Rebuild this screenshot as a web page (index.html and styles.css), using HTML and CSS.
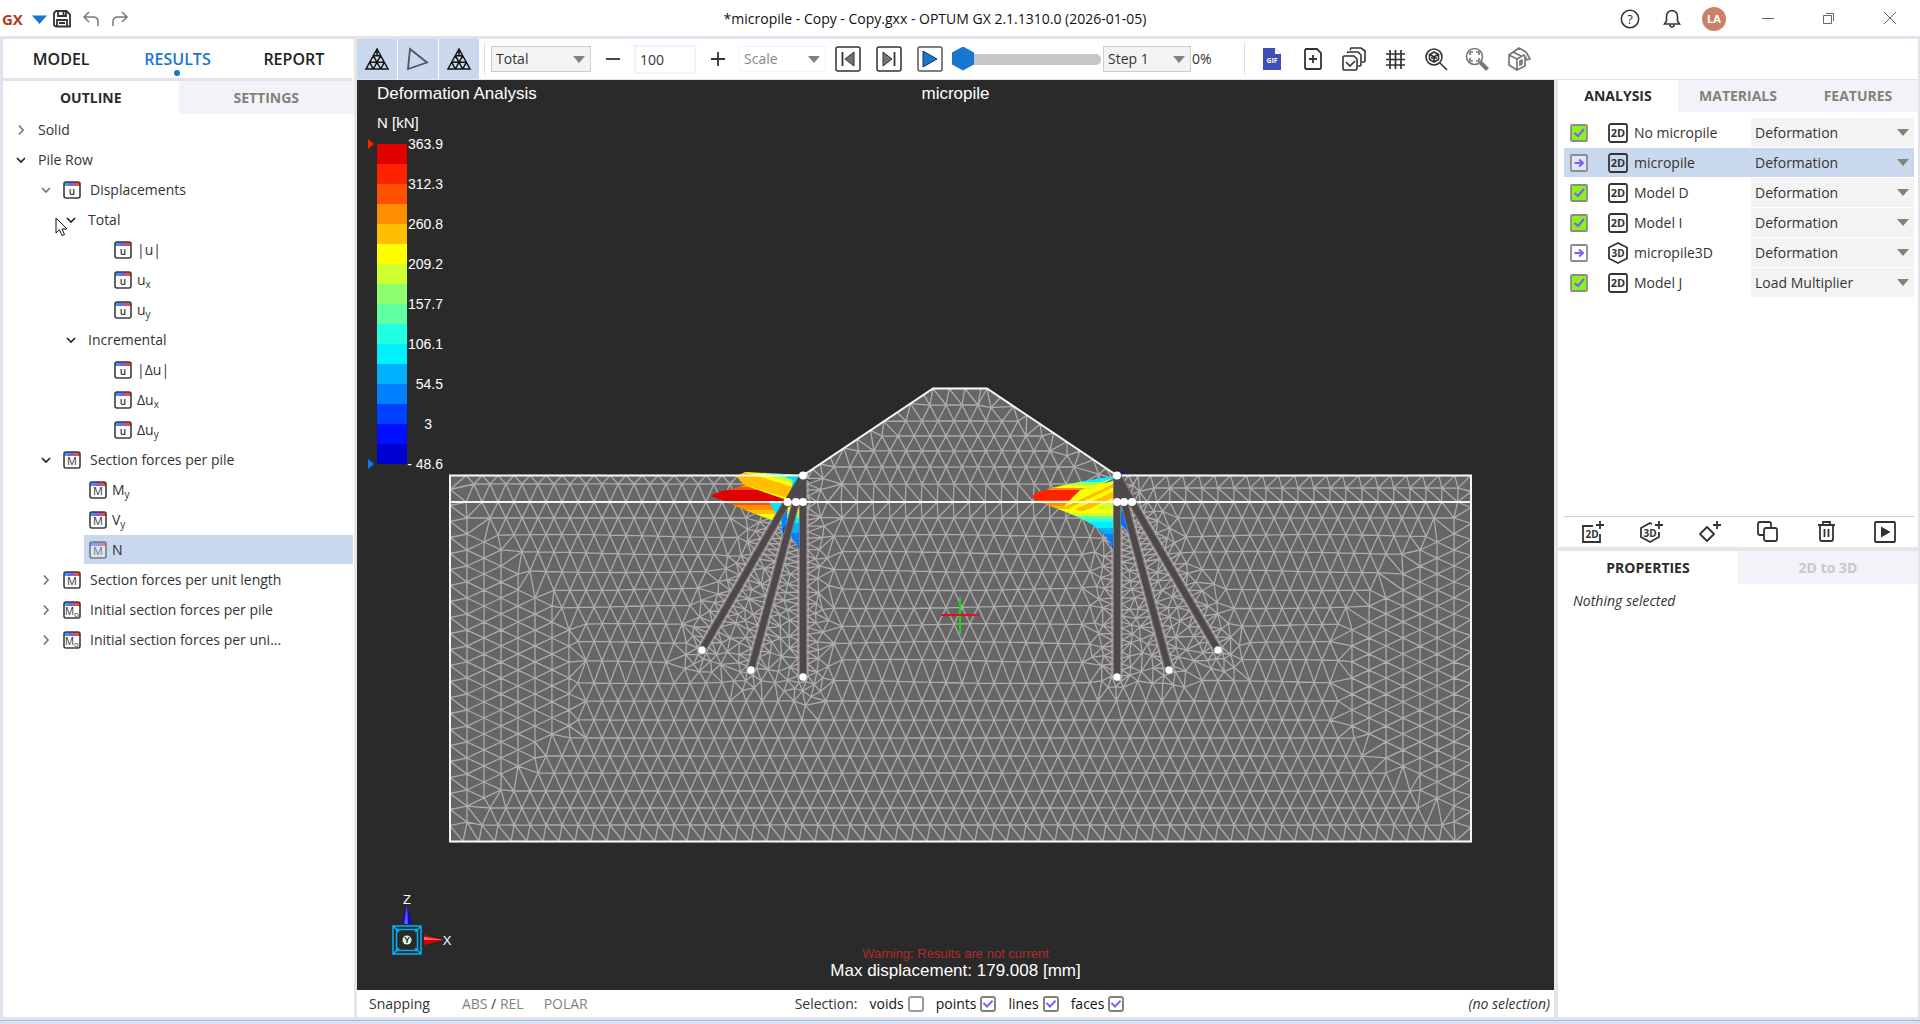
FILE: index.html
```html
<!DOCTYPE html>
<html lang="en">
<head>
<meta charset="utf-8">
<title>*micropile - Copy - Copy.gxx - OPTUM GX 2.1.1310.0 (2026-01-05)</title>
<link rel="stylesheet" href="styles.css">
</head>
<body>
<svg class="defs" aria-hidden="true">
  <defs>
    <linearGradient id="spectrum"><stop offset="0" stop-color="#1fb4ff"/><stop offset=".45" stop-color="#7a5cff"/><stop offset=".8" stop-color="#f0503c"/><stop offset="1" stop-color="#e8402a"/></linearGradient>
    <symbol id="frame" viewBox="0 0 18 18"><rect x="1" y="1" width="16" height="16" rx="2" fill="#fff" fill-opacity=".6"/><rect x="1" y="1" width="16" height="4" fill="url(#spectrum)"/><rect x="1" y="1" width="16" height="16" rx="2" fill="none" stroke="#3c3c3c" stroke-width="1.6"/></symbol>
    <symbol id="res-u" viewBox="0 0 18 18"><use href="#frame"/><text class="glyph" x="9" y="14" text-anchor="middle" font-size="10" font-weight="600">u</text></symbol>
    <symbol id="res-m" viewBox="0 0 18 18"><use href="#frame"/><text class="glyph" x="9" y="14" text-anchor="middle" font-size="11">M</text></symbol>
    <symbol id="res-m0" viewBox="0 0 18 18"><use href="#frame"/><text class="glyph" x="2" y="14" font-size="10">M</text><text class="glyph" x="11" y="16" font-size="8">o</text></symbol>
    <symbol id="open" viewBox="0 0 16 16"><path d="M4 6l4 4 4-4" fill="none" stroke="currentColor" stroke-width="1.7"/></symbol>
    <symbol id="closed" viewBox="0 0 16 16"><path d="M6 3.500l4 4.500-4 4.500" fill="none" stroke="currentColor" stroke-width="1.7"/></symbol>
    <symbol id="mesh-icon" viewBox="0 0 26 24"><path d="M13 2L24 22H2zM9.300 8.700h7.400M5.700 15.300h14.600M9.300 8.700L16.700 22M16.700 8.700L9.300 22M5.700 15.300L9.300 22M20.300 15.300L16.700 22M13 2v6.700" fill="none" stroke="#111" stroke-width="1.5"/></symbol>
    <symbol id="dim2" viewBox="0 0 20 20"><rect x="1" y="1" width="18" height="18" rx="2" fill="none" stroke="#333" stroke-width="1.8"/><text class="glyph" x="10" y="14" text-anchor="middle" font-size="11" font-weight="700">2D</text></symbol>
    <symbol id="dim3" viewBox="0 0 20 22"><path d="M10 1l9 4.500v11L10 21l-9-4.500v-11z" fill="none" stroke="#333" stroke-width="1.8" stroke-linejoin="round"/><text class="glyph" x="10" y="15" text-anchor="middle" font-size="10" font-weight="700">3D</text></symbol>
    <symbol id="done" viewBox="0 0 18 18"><rect x="1" y="1" width="16" height="16" rx="1" fill="#8cf01e" stroke="#8c8c8c" stroke-width="1.8"/><path d="M4.500 9l3.500 3 6-7" fill="none" stroke="#7b5cff" stroke-width="2"/></symbol>
    <symbol id="queued" viewBox="0 0 18 18"><rect x="1" y="1" width="16" height="16" rx="1" fill="#fff" fill-opacity=".4" stroke="#8c8c8c" stroke-width="1.8"/><path d="M4.500 9h8M9 5.500L13 9l-4 3.500" fill="none" stroke="#7b5cff" stroke-width="2"/></symbol>
  </defs>
</svg>

<header class="titlebar">
  <div class="quick">
    <b class="logo">GX</b>
    <button aria-label="File menu"><svg width="16" height="16"><path d="M1 4.500h15L8.500 13z" fill="#1776d0"/></svg></button>
    <button aria-label="Save"><svg width="18" height="18" fill="none" stroke="#333" stroke-width="1.8"><path d="M3 1h10.500L17 4.500V16.500H3L1 15V3zM5 1v5h8V1M4 17v-7h10v7M6 13h6"/><path d="M10.500 2v3"/></svg></button>
    <button aria-label="Undo"><svg width="18" height="18" fill="none" stroke="#777" stroke-width="1.5"><path d="M7 2L2 7l5 5M2 7h9q5 0 5 5v4"/></svg></button>
    <button aria-label="Redo"><svg width="18" height="18" fill="none" stroke="#777" stroke-width="1.5"><path d="M11 2l5 5-5 5M16 7H7q-5 0-5 5v4"/></svg></button>
  </div>
  <h1>*micropile - Copy - Copy.gxx - OPTUM GX 2.1.1310.0 (2026-01-05)</h1>
  <div class="account">
    <button aria-label="Help"><svg width="20" height="20"><circle cx="10" cy="10" r="8.700" fill="none" stroke="#333" stroke-width="1.500"/><text class="glyph" x="10" y="15" text-anchor="middle" font-size="13">?</text></svg></button>
    <button aria-label="Notifications"><svg width="18" height="20" fill="none" stroke="#333" stroke-width="1.600"><path d="M1.500 15h15l-2-3V8q0-6-5.500-6.500Q3.500 2 3.500 8v4zM6.500 16q2.500 4 5 0"/></svg></button>
    <span class="avatar">LA</span>
    <div class="window">
      <button aria-label="Minimize"><svg width="12" height="12"><path d="M0 6.500h12" stroke="#666"/></svg></button>
      <button aria-label="Restore"><svg width="12" height="12" fill="none" stroke="#666"><path d="M.5 3.500h8v8h-8zM3 1.500h7.500V9"/></svg></button>
      <button aria-label="Close"><svg width="12" height="12"><path d="M0 0l12 12M12 0L0 12" stroke="#666"/></svg></button>
    </div>
  </div>
</header>

<div class="workspace">
  <aside class="left">
    <nav class="modes">
      <a href="#model">MODEL</a><a href="#results" class="current">RESULTS</a><a href="#report">REPORT</a>
    </nav>
    <div class="tabs tall"><button class="on">OUTLINE</button><button>SETTINGS</button></div>
    <ul class="tree">
      <li><button class="l0"><svg class="chev shut"><use href="#closed"/></svg>Solid</button></li>
      <li><button class="l0"><svg class="chev"><use href="#open"/></svg>Pile Row</button></li>
      <li><button class="l1"><svg class="chev soft"><use href="#open"/></svg><svg class="kind"><use href="#res-u"/></svg>Displacements</button></li>
      <li><button class="l2"><svg class="chev"><use href="#open"/></svg>Total</button></li>
      <li><button class="leaf deep"><svg class="kind"><use href="#res-u"/></svg><span>|u|</span></button></li>
      <li><button class="leaf deep"><svg class="kind"><use href="#res-u"/></svg><span>u<sub>x</sub></span></button></li>
      <li><button class="leaf deep"><svg class="kind"><use href="#res-u"/></svg><span>u<sub>y</sub></span></button></li>
      <li><button class="l2"><svg class="chev"><use href="#open"/></svg>Incremental</button></li>
      <li><button class="leaf deep"><svg class="kind"><use href="#res-u"/></svg><span>|Δu|</span></button></li>
      <li><button class="leaf deep"><svg class="kind"><use href="#res-u"/></svg><span>Δu<sub>x</sub></span></button></li>
      <li><button class="leaf deep"><svg class="kind"><use href="#res-u"/></svg><span>Δu<sub>y</sub></span></button></li>
      <li><button class="l1"><svg class="chev"><use href="#open"/></svg><svg class="kind"><use href="#res-m"/></svg>Section forces per pile</button></li>
      <li><button class="leaf"><svg class="kind"><use href="#res-m"/></svg><span>M<sub>y</sub></span></button></li>
      <li><button class="leaf"><svg class="kind"><use href="#res-m"/></svg><span>V<sub>y</sub></span></button></li>
      <li><button class="leaf selected"><svg class="kind"><use href="#res-m"/></svg><span>N</span></button></li>
      <li><button class="l1"><svg class="chev shut"><use href="#closed"/></svg><svg class="kind"><use href="#res-m"/></svg>Section forces per unit length</button></li>
      <li><button class="l1"><svg class="chev shut"><use href="#closed"/></svg><svg class="kind"><use href="#res-m0"/></svg>Initial section forces per pile</button></li>
      <li><button class="l1"><svg class="chev shut"><use href="#closed"/></svg><svg class="kind"><use href="#res-m0"/></svg>Initial section forces per uni...</button></li>
    </ul>
    <svg class="pointer" width="14" height="20" viewBox="0 0 14 20"><path d="M1 1v15l3.500-3.200L7 18.500l2.500-1-2.500-5.500h5z" fill="#fff" stroke="#111"/></svg>
  </aside>

  <div class="main">
    <div class="toolbar">
      <button class="toggle" aria-label="Show mesh"><svg width="26" height="24"><use href="#mesh-icon"/></svg></button>
      <button class="toggle" aria-label="Show outline"><svg width="26" height="24"><path d="M5 2l17 13.500L3 22z" fill="none" stroke="#555" stroke-width="1.800"/></svg></button>
      <button class="toggle" aria-label="Show deformed mesh"><svg width="26" height="24"><use href="#mesh-icon"/></svg></button>
      <i class="rule"></i>
      <label class="pick kind-pick"><select aria-label="Result kind"><option>Total</option></select></label>
      <button class="sign" aria-label="Decrease"><svg width="16" height="16"><path d="M1 8h14" stroke="#333" stroke-width="1.800"/></svg></button>
      <input class="amount" type="text" value="100" aria-label="Scale percent">
      <button class="sign" aria-label="Increase"><svg width="16" height="16"><path d="M1 8h14M8 1v14" stroke="#333" stroke-width="1.800"/></svg></button>
      <label class="pick scale-pick"><select aria-label="Scale"><option>Scale</option></select></label>
      <div class="player">
        <button aria-label="Previous step"><svg width="26" height="26"><rect x="1" y="1" width="24" height="24" rx="2" fill="none" stroke="#333" stroke-width="1.500"/><path d="M19 6v14L10 13z" fill="#6f7868" stroke="#333"/><path d="M7.500 6v14" stroke="#333" stroke-width="1.800"/></svg></button>
        <button aria-label="Next step"><svg width="26" height="26"><rect x="1" y="1" width="24" height="24" rx="2" fill="none" stroke="#333" stroke-width="1.500"/><path d="M7 6v14l9-7z" fill="#6f7868" stroke="#333"/><path d="M18.500 6v14" stroke="#333" stroke-width="1.800"/></svg></button>
        <button aria-label="Play"><svg width="26" height="26"><rect x="1" y="1" width="24" height="24" rx="2" fill="none" stroke="#555" stroke-width="1.500"/><path d="M6 5v16l14-8z" fill="#1776d0" stroke="#234"/></svg></button>
      </div>
      <input class="slider" type="range" min="0" max="100" value="0" aria-label="Step position">
      <label class="pick step-pick"><select aria-label="Step"><option>Step 1</option></select></label>
      <output class="percent">0%</output>
      <i class="rule far"></i>
      <div class="tools">
        <button aria-label="Record GIF"><svg width="24" height="24"><path d="M3 1h12l6 6v16H3z" fill="#3f4db8"/><path d="M15 1v6h6z" fill="#fff"/><text x="12" y="16" text-anchor="middle" font-size="7" font-weight="700" fill="#fff">GIF</text></svg></button>
        <button aria-label="New view"><svg width="24" height="24" fill="none" stroke="#333" stroke-width="1.800"><path d="M5 2h11l4 4v15l-1 1H5l-1-1V3zM8 12h8M12 8v8"/></svg></button>
        <button aria-label="Copy checked"><svg width="24" height="24" fill="none" stroke="#333" stroke-width="1.600"><path d="M2 9h10l3 3v10l-1 1H2l-1-1V10zM5 6l1-1h10l3 3v10l-1 1h-2M8 3l1-2h10l4 3v10l-1 1h-2M4 15l4 4 5-5"/></svg></button>
        <button aria-label="Grid"><svg width="24" height="24" stroke="#333" stroke-width="1.700"><path d="M7 3v19M12.500 3v19M18 3v19M3 7h19M3 12.500h19M3 18h19"/></svg></button>
        <button aria-label="Zoom to object"><svg width="24" height="24" fill="none" stroke="#333" stroke-width="1.600"><circle cx="10" cy="10" r="8"/><path d="M16 16l7 7"/><path d="M10 5l4.500 2.500v5L10 15l-4.500-2.500v-5zM6 7.500l4 2.500 4-2.500M10 10v5M7 11h6"/></svg></button>
        <button aria-label="Zoom window"><svg width="24" height="24" fill="none" stroke="#777" stroke-width="1.600"><circle cx="9.500" cy="9.500" r="8"/><path d="M15.500 15.500l7 7" stroke-width="4"/><path d="M5 8V5h3M11 5h3v3M14 11v3h-3M8 14H5v-3"/></svg></button>
        <button aria-label="View cube"><svg width="26" height="24" fill="none" stroke="#777" stroke-width="1.700" stroke-linejoin="round"><path d="M3 8L13 1l7 4 4 7-3 1-3-5-7 4zM3 8v10l8 5V12M11 23l8-4v-9M7 5l8 4M14 14l2-1v4l-2 1z"/></svg></button>
      </div>
    </div>

    <div class="columns">
      <div class="center">
        <div class="viewport">
          <svg class="scene" viewBox="357 80 1197 910" preserveAspectRatio="xMidYMid meet" role="img" aria-label="Finite element model">
            <defs>
              <linearGradient id="bandLow" gradientUnits="userSpaceOnUse" x1="0" y1="484" x2="0" y2="524"></linearGradient>
              <linearGradient id="bandFan" gradientUnits="userSpaceOnUse" x1="762" y1="470" x2="754" y2="496"></linearGradient>
              <linearGradient id="bandTail" gradientUnits="userSpaceOnUse" x1="0" y1="502" x2="0" y2="553"></linearGradient>
              <linearGradient id="bandRight" gradientUnits="userSpaceOnUse" x1="0" y1="476" x2="0" y2="552"></linearGradient>
              <linearGradient id="bandRightFan" gradientUnits="userSpaceOnUse" x1="1082" y1="478" x2="1098" y2="512"></linearGradient>
            </defs>
            <path class="soil" d="M450 475.500H803L933 388.500H987L1117 475.500H1471V841.500H450Z"/>
            <path id="mesh" class="mesh"/>
            <g>
              <path fill="url(#bandLow)" d="M711 496Q718 491 732 489L745 485 792 498V528Q775 521 755 514L728 503Z"/>
              <path fill="#00e8ff" d="M769 502H792V536H783L781 522 775 512Z"/>
              <path fill="#0080ff" d="M781 513L792 502V536H783Z"/>
              <path fill="#0030ff" d="M783 528L790 522V536H783Z"/>
              <path fill="url(#bandTail)" d="M788 502H803V553H800Q797 541 786 531Z"/>
              <path fill="url(#bandFan)" d="M803 475L785 474 745 472 737 476Q739 483 752 488L790 501Z"/>
              <path fill="#00d8ff" d="M803 476L778 474 793 480 789 500Z"/>
              <path fill="#0000d8" d="M804 477l10 6-1-1-9-3z"/>
              <path fill="url(#bandRight)" d="M1117 476Q1085 480 1060 486L1038 492Q1029 496 1035 500L1050 506Q1078 516 1093 525 1109 535 1114 552H1117Z"/>
              <path fill="url(#bandRightFan)" d="M1064 506L1080 490 1116 477V509L1080 511Z"/>
              <path fill="#0080ff" d="M1118 476L1102 484 1116 480Z"/>
              <path fill="#00c8ff" d="M1118 503h6v25l-6-6z"/>
              <path fill="#0070ff" d="M1120 510l5 4 5 20-10-11z"/>
              <path fill="#0000e0" d="M1119 474l6-3-5 5zM1126 502l6 5-7-1z"/>
            </g>
            <path class="edge" d="M450 475.500H803L933 388.500H987L1117 475.500H1471V841.500H450ZM450 502H1471"/>
            <g class="pile-shadow"><path d="M787 502L702 650M796 502L751 670M803 475V677M1117 475V677M1124 502L1169 670M1117 475L1132 502 1218 650"/></g>
            <g class="piles"><path d="M803 475L787 502 702 650M803 475L796 502 751 670M803 475V677M1117 475V677M1117 475L1124 502 1169 670M1117 475L1132 502 1218 650"/></g>
            <path d="M450 502H1471" class="edge thin"/>
            <g fill="#fff">
              <circle cx="803" cy="475.500" r="4"/><circle cx="787.500" cy="502" r="4"/><circle cx="796" cy="502" r="4"/><circle cx="803" cy="502" r="4"/>
              <circle cx="702" cy="650" r="3.700"/><circle cx="751" cy="670" r="3.700"/><circle cx="803" cy="677" r="3.700"/>
              <circle cx="1117" cy="475.500" r="4"/><circle cx="1117" cy="502" r="4"/><circle cx="1124" cy="502" r="4"/><circle cx="1132" cy="502" r="4"/>
              <circle cx="1117" cy="677" r="3.700"/><circle cx="1169" cy="670" r="3.700"/><circle cx="1218" cy="650" r="3.700"/>
            </g>
            <path d="M960 597v37" stroke="#14dc14" stroke-width="2"/><path d="M941 615h38" stroke="#e01414" stroke-width="2"/>
          </svg>
          <div class="caption"><p>Deformation Analysis</p><p class="unit">N [kN]</p></div>
          <p class="model-name">micropile</p>
          <div class="legend">
            <div class="markers"><i class="max"></i><i class="min"></i></div>
            <div class="scale" id="scale"></div>
            <ol class="values"><li>363.9</li><li>312.3</li><li>260.8</li><li>209.2</li><li>157.7</li><li>106.1</li><li>54.5</li><li class="whole">3</li><li>- 48.6</li></ol>
          </div>
          <svg class="axes" width="64" height="64" viewBox="390 893 64 64">
            <path d="M407 905l5 19h-10z" fill="#0a0ac8"/><path d="M407 905l1 19h-4z" fill="#5a5aff"/>
            <path d="M444 940l-20-5v10z" fill="#d00"/><path d="M444 940l-20-3v3z" fill="#ff7070"/>
            <path d="M393 926h28v28h-28zM396.500 929.500h21v21h-21zM393 926l6 6M421 926l-6 6M393 954l6-6M421 954l-6-6" fill="none" stroke="#00b4f5" stroke-width="1.500"/>
            <circle cx="407" cy="940" r="4.500" fill="#dcf5dc"/>
            <text x="407" y="943" text-anchor="middle" font-size="9" font-weight="700" fill="#132">Y</text>
            <text x="407" y="904" text-anchor="middle" font-size="13" fill="#fff">Z</text>
            <text x="447" y="945" text-anchor="middle" font-size="13" fill="#fff">X</text>
          </svg>
          <div class="notes"><p class="warn">Warning: Results are not current</p><p>Max displacement: 179.008 [mm]</p></div>
        </div>
        <footer class="status">
          <div class="snapping">
            <button class="snap">Snapping</button>
            <span class="pair"><button>ABS</button> / <button>REL</button></span>
            <button class="polar">POLAR</button>
          </div>
          <fieldset aria-label="Selection">
            <span>Selection:</span>
            <label>voids<input type="checkbox"></label>
            <label>points<input type="checkbox" checked></label>
            <label>lines<input type="checkbox" checked></label>
            <label>faces<input type="checkbox" checked></label>
          </fieldset>
          <em>(no selection)</em>
        </footer>
      </div>

      <aside class="right">
        <section class="analysis">
          <div class="tabs"><button class="on">ANALYSIS</button><button>MATERIALS</button><button>FEATURES</button></div>
          <ul class="stages">
            <li><svg class="state"><use href="#done"/></svg><svg class="dim"><use href="#dim2"/></svg><span>No micropile</span><label class="pick"><select aria-label="No micropile analysis"><option>Deformation</option></select></label></li>
            <li class="active"><svg class="state"><use href="#queued"/></svg><svg class="dim"><use href="#dim2"/></svg><span>micropile</span><label class="pick"><select aria-label="micropile analysis"><option>Deformation</option></select></label></li>
            <li><svg class="state"><use href="#done"/></svg><svg class="dim"><use href="#dim2"/></svg><span>Model D</span><label class="pick"><select aria-label="Model D analysis"><option>Deformation</option></select></label></li>
            <li><svg class="state"><use href="#done"/></svg><svg class="dim"><use href="#dim2"/></svg><span>Model I</span><label class="pick"><select aria-label="Model I analysis"><option>Deformation</option></select></label></li>
            <li><svg class="state"><use href="#queued"/></svg><svg class="dim"><use href="#dim3"/></svg><span>micropile3D</span><label class="pick"><select aria-label="micropile3D analysis"><option>Deformation</option></select></label></li>
            <li><svg class="state"><use href="#done"/></svg><svg class="dim"><use href="#dim2"/></svg><span>Model J</span><label class="pick"><select aria-label="Model J analysis"><option>Load Multiplier</option></select></label></li>
          </ul>
          <div class="actions">
            <button aria-label="Add 2D stage"><svg width="24" height="24" fill="none" stroke="#333" stroke-width="1.800"><path d="M12 6H2v16h17v-8M19 1v8M15 5h8"/><text class="glyph" x="11" y="18" text-anchor="middle" font-size="10" font-weight="700">2D</text></svg></button>
            <button aria-label="Add 3D stage"><svg width="24" height="24" fill="none" stroke="#333" stroke-width="1.800"><path d="M13 4l-2-1-9 5v9l9 5 9-5v-5M20 1v8M16 5h8"/><text class="glyph" x="11" y="17" text-anchor="middle" font-size="10" font-weight="700">3D</text></svg></button>
            <button aria-label="Add feature"><svg width="24" height="24" fill="none" stroke="#333" stroke-width="1.800"><path d="M9 7l7 7-7 7-7-7zM19 1v8M15 5h8" stroke-linejoin="round"/></svg></button>
            <button aria-label="Duplicate"><svg width="24" height="24" fill="none" stroke="#333" stroke-width="1.800"><rect x="8" y="8" width="13" height="13" rx="2"/><path d="M8 15H4q-2 0-2-2V4q0-2 2-2h9q2 0 2 2v4"/></svg></button>
            <button aria-label="Delete"><svg width="24" height="24" fill="none" stroke="#333" stroke-width="1.800"><path d="M4 5h17M9 5V2h7v3M6 5v14q0 2 2 2h9q2 0 2-2V5M10.500 9v8M14.500 9v8"/></svg></button>
            <button aria-label="Run"><svg width="24" height="24"><rect x="2" y="2" width="20" height="20" rx="1" fill="none" stroke="#333" stroke-width="1.800"/><path d="M8 6.500v11l9.500-5.500z" fill="#333"/></svg></button>
          </div>
        </section>
        <section class="props">
          <div class="tabs tall"><button class="on">PROPERTIES</button><button disabled>2D to 3D</button></div>
          <p><em>Nothing selected</em></p>
        </section>
      </aside>
    </div>
  </div>
</div>
<div class="sill"></div>
<script src="scene.js"></script>
</body>
</html>
```
FILE: styles.css
```css
* { box-sizing: border-box; margin: 0; padding: 0; }
html, body { height: 100%; }
body {
  display: flex;
  flex-direction: column;
  background: #fff;
  color: #333;
  font: 15px/20px "Open Sans", "Noto Sans", sans-serif;
  overflow: hidden;
}
button, select, input { font: inherit; color: inherit; border: 0; background: none; }
button { display: flex; align-items: center; justify-content: center; }
ul, ol { list-style: none; }
a { color: inherit; text-decoration: none; }
svg { flex: none; display: block; }
.defs { position: absolute; width: 0; height: 0; }
.glyph { fill: #333; stroke: none; font-family: "Open Sans", sans-serif; }

/* title bar */
.titlebar { display: flex; align-items: center; height: 39px; padding-top: 2px; border-bottom: 3px solid #e3e1ee; }
.titlebar h1 { padding-right: 52px; color: #111; font-size: 14px; font-weight: 400; }
.quick, .account { flex: 1; display: flex; align-items: center; }
.quick { padding-left: 2px; }
.quick button { margin-right: 11px; }
.quick button:nth-of-type(1) { margin: 0 6px 0 8px; }
.logo { color: #b03a1e; font-size: 15px; line-height: 18px; }
.account { justify-content: flex-end; gap: 23px; }
.avatar { width: 24px; height: 24px; margin-left: -2px; border-radius: 50%; background: #cc8068; color: #fff; font-size: 11px; font-weight: 700; line-height: 24px; text-align: center; }
.window { display: flex; margin-left: -12px; padding-bottom: 3px; }
.window button { width: 61px; height: 30px; }

/* frame */
.workspace { flex: 1; display: flex; min-height: 0; border: solid #e3e1ee; border-width: 0 2px 3px 3px; }
.sill { height: 4px; border-top: 1px solid #b4b8c4; background: #d5e1f5; }

/* left panel */
.left { position: relative; flex: none; width: 354px; border-right: 3px solid #e6e6e6; }
.modes { display: flex; height: 42px; margin-right: 2px; border-bottom: 3px solid #e3e1ee; font-size: 16px; font-weight: 600; color: #222; }
.modes a { position: relative; flex: 1; text-align: center; line-height: 40px; }
.modes .current { color: #1776d0; }
.modes .current::after { content: ""; position: absolute; left: calc(50% - 3px); bottom: 2px; width: 6px; height: 6px; border-radius: 50%; background: #1776d0; }
.tabs { display: flex; height: 32px; font-size: 14px; font-weight: 700; }
.tabs.tall { height: 33px; }
.tabs button { flex: 1; background: #f3f2f9; color: #7d8577; }
.tabs .on { background: #fff; color: #2b2b2b; }
.tabs button:disabled { color: #c9c9c9; }
.tree { padding-top: 1px; }
.tree button { justify-content: flex-start; width: 100%; height: 29px; margin-bottom: 1px; gap: 8px; font-size: 14px; white-space: nowrap; color: #333; }
.chev { width: 16px; height: 16px; color: #222; }
.chev.shut, .chev.soft { color: #777; }
.kind { width: 18px; height: 18px; }
.tree .l0 { padding-left: 10px; gap: 9px; }
.tree .l1 { padding-left: 35px; gap: 9px; }
.tree .l2 { padding-left: 60px; gap: 9px; }
.tree .leaf { width: calc(100% - 82px); margin-left: 81px; padding-left: 5px; gap: 5px; }
.tree .deep { padding-left: 30px; }
.tree .selected { background: #c9d8ed; }
.selected .kind { opacity: .6; }
sub { font-size: 10px; line-height: 0; vertical-align: -3px; }
.pointer { position: absolute; left: 52px; top: 178px; }

/* toolbar */
.main { flex: 1; display: flex; flex-direction: column; min-width: 0; }
.toolbar { display: flex; align-items: center; height: 41px; border-bottom: 1px solid #e3e1ee; }
.toggle { width: 40px; height: 40px; margin-right: 1px; background: #c9d8ed; }
.rule { width: 1px; height: 32px; margin: 0 6px 0 4px; background: #ddd; }
.pick { display: grid; align-items: center; }
.pick select, .pick::after { grid-area: 1 / 1; }
.pick select { appearance: none; width: 100%; height: 100%; padding: 0 4px; }
.pick::after { content: ""; justify-self: end; margin-right: 5px; border: solid transparent; border-width: 7px 6px 0; border-top-color: #7d8577; pointer-events: none; }
.toolbar .pick { height: 26px; border: 1px solid #ccc; background: #f3f3f3; font-size: 14px; }
.kind-pick { width: 100px; }
.sign { width: 43px; height: 30px; }
.amount { width: 62px; height: 29px; padding: 0 4px; border: 2px solid #f3f2f9; font-size: 14px; }
.toolbar .scale-pick { width: 87px; border-color: #f3f2f9; background: #fff; color: #888; }
.player { display: flex; gap: 15px; margin: 0 9px; }
.slider { appearance: none; width: 149px; height: 26px; }
.slider::-webkit-slider-runnable-track { height: 11px; border-radius: 5px; background: #c8c5c8; }
.slider::-webkit-slider-thumb { appearance: none; width: 22px; height: 24px; margin-top: -7px; background: #1776d0; clip-path: polygon(50% 0, 100% 25%, 100% 75%, 50% 100%, 0 75%, 0 25%); }
.toolbar .step-pick { width: 88px; margin-left: 2px; }
.percent { margin-left: 1px; font-size: 14px; }
.rule.far { margin: 0 15px 0 32px; }
.tools { display: flex; gap: 17px; }

/* centre */
.columns { flex: 1; display: flex; min-height: 0; }
.center { flex: 1; display: flex; flex-direction: column; min-width: 0; }
.viewport { position: relative; flex: 1; min-height: 0; overflow: hidden; background: #2a2a2a; color: #fff; font: 17px/20px "Liberation Sans", Arial, sans-serif; }
.scene { position: absolute; inset: 0; width: 100%; height: 100%; }
.soil { fill: #666; }
.mesh { fill: none; stroke: #acacac; stroke-width: 1.3; }
.edge { fill: none; stroke: #f4f4f4; stroke-width: 2; }
.edge.thin { stroke-width: 1; }
.piles, .pile-shadow { fill: none; stroke: #4b4949; stroke-width: 6; stroke-linejoin: round; }
.pile-shadow { stroke: #8d6f72; stroke-width: 8; }
.caption { position: absolute; left: 20px; top: 4px; }
.caption .unit { margin-top: 9px; font-size: 15px; }
.model-name { position: absolute; left: 0; right: 0; top: 4px; text-align: center; }
.legend { position: absolute; left: 11px; top: 54px; display: flex; font-size: 14px; }
.markers { display: flex; flex-direction: column; justify-content: space-between; width: 9px; margin: 5px 0; }
.markers i { width: 0; border: solid transparent; border-width: 5px 0 5px 6px; }
.markers .max { border-left-color: #ff2200; }
.markers .min { border-left-color: #0080ff; }
.scale { width: 30px; margin: 10px 0; }
.scale i { display: block; height: 20px; }
.values { width: 36px; }
.values li { height: 40px; text-align: right; }
.values li:last-child { height: 20px; white-space: nowrap; }
.values .whole { padding-right: 11px; }
.axes { position: absolute; left: 33px; bottom: 33px; }
.notes { position: absolute; left: 0; right: 0; bottom: 9px; text-align: center; }
.notes .warn { margin-bottom: -3px; color: #b02c2c; font-size: 13px; }

/* status bar */
.status { display: grid; grid-template-columns: 1fr auto 1fr; align-items: center; height: 27px; padding: 0 4px 0 12px; font-size: 14px; }
.snapping { display: flex; align-items: center; }
.status button { display: inline; color: #7d8577; }
.status .snap { color: #333; }
.pair { margin: 0 20px 0 32px; }
.status fieldset { display: flex; align-items: center; gap: 12px; border: 0; color: #111; }
.status fieldset > span { color: #333; }
.status em { text-align: right; }
.status label { display: flex; align-items: center; gap: 4px; }
.status input { appearance: none; width: 16px; height: 16px; border: 2px solid #999; border-radius: 3px; }
.status input:checked { display: grid; place-items: center; border-color: #7d8577; }
.status input:checked::after { content: ""; width: 4px; height: 7px; margin-bottom: 2px; border: solid #7b5cff; border-width: 0 2px 2px 0; transform: rotate(45deg); }

/* right panel */
.right { flex: none; display: flex; flex-direction: column; width: 364px; border-left: 4px solid #e6e6e6; }
.analysis { flex: none; display: flex; flex-direction: column; height: 50.3%; border-bottom: 4px solid #e6e6e6; }
.stages { flex: 1; margin: 6px 4px 0 6px; }
.stages li { display: flex; align-items: center; height: 29px; margin-bottom: 1px; font-size: 14px; }
.stages .active { background: #c9d8ed; }
.state { width: 18px; height: 18px; margin: 0 20px 0 6px; }
.dim { width: 20px; height: 22px; margin-right: 6px; }
.stages span { flex: 1; }
.stages .pick { width: 163px; height: 29px; background: #f3f3f3; }
.stages .active .pick { background: none; }
.actions { display: flex; justify-content: space-around; align-items: center; height: 31px; margin: 0 4px 0 6px; border-top: 1px solid #ccc; }
.props p { padding: 7px 15px; font-size: 14px; }
```
FILE: scene.js
```js
// Contour colours, from the highest value to the lowest.
const ramp = ['#e00000', '#ff2200', '#ff5000', '#ff8f00', '#ffbf00', '#ffff00', '#cfff30', '#8fff70',
  '#60ffa0', '#20ffe0', '#00f0ff', '#00b0ff', '#0080ff', '#0040ff', '#0010ff', '#0000d0'];

const scale = document.getElementById('scale');
for (const colour of ramp) {
  const band = document.createElement('i');
  band.style.background = colour;
  scale.append(band);
}

// Hard-edged gradient stops: [end position in percent, ramp index]
const bands = {
  bandLow: [[8, 3], [15, 2], [44, 0], [52, 2], [64, 3], [74, 4], [82, 5], [91, 6], [100, 7]],
  bandFan: [[8, 7], [14, 6], [26, 5], [70, 4], [82, 5], [90, 6], [100, 8]],
  bandTail: [[9, 3], [16, 5], [24, 6], [32, 8], [42, 10], [60, 11], [86, 12], [100, 13]],
  bandRight: [[8, 10], [12, 7], [16, 5], [19, 3], [32, 1], [36, 2], [40, 3], [44, 4], [49, 5], [53, 6], [57, 8], [61, 9], [68, 10], [76, 11], [92, 12], [100, 13]],
  bandRightFan: [[10, 11], [18, 10], [26, 8], [34, 6], [50, 5], [58, 4], [68, 5], [82, 4], [90, 5], [100, 6]],
};
for (const [id, stops] of Object.entries(bands)) {
  const gradient = document.getElementById(id);
  let from = 0;
  for (const [to, index] of stops) {
    for (const at of [from, to]) {
      const stop = document.createElementNS('http://www.w3.org/2000/svg', 'stop');
      stop.setAttribute('offset', at + '%');
      stop.setAttribute('stop-color', ramp[index]);
      gradient.append(stop);
    }
    from = to;
  }
}

// Graded triangular mesh: fine around the piles, regular rows elsewhere.
const outline = [[450, 475.5], [803, 475.5], [933, 388.5], [987, 388.5], [1117, 475.5], [1471, 475.5], [1471, 841.5], [450, 841.5]];
const piles = [[787, 502, 702, 650], [796, 502, 751, 670], [803, 475, 803, 677],
  [1117, 475, 1117, 677], [1124, 502, 1169, 670], [1132, 502, 1218, 650]];
let seed = 7;
const random = () => (seed = (seed * 16807) % 2147483647) / 2147483647;

function inside(x, y) {
  let hit = false;
  for (let i = 0, j = outline.length - 1; i < outline.length; j = i++) {
    const [ax, ay] = outline[i], [bx, by] = outline[j];
    if ((ay > y) !== (by > y) && x < (bx - ax) * (y - ay) / (by - ay) + ax) hit = !hit;
  }
  return hit;
}
function pileDistance(x, y) {
  let best = Infinity;
  for (const [ax, ay, bx, by] of piles) {
    const dx = bx - ax, dy = by - ay;
    const t = Math.max(0, Math.min(1, ((x - ax) * dx + (y - ay) * dy) / (dx * dx + dy * dy)));
    best = Math.min(best, Math.hypot(x - ax - t * dx, y - ay - t * dy));
  }
  return best;
}
const size = (x, y) => Math.min(16, 5 + 0.36 * pileDistance(x, y));

const points = [];
function add(x, y, gap) {
  for (const p of points) if (Math.abs(p[0] - x) < gap && Math.hypot(p[0] - x, p[1] - y) < gap) return;
  points.push([x + (random() - 0.5) * 0.2, y + (random() - 0.5) * 0.2]);
}
function addLine(ax, ay, bx, by) {
  const length = Math.hypot(bx - ax, by - ay);
  for (let s = 0; s <= length;) {
    const x = ax + (bx - ax) * s / length, y = ay + (by - ay) * s / length;
    add(x, y, 4);
    s += size(x, y);
  }
  add(bx, by, 4);
}
outline.forEach(([x, y], i) => addLine(x, y, ...outline[(i + 1) % outline.length]));
addLine(450, 502, 1471, 502);
for (const [ax, ay, bx, by] of piles) {
  const length = Math.hypot(bx - ax, by - ay), ux = (bx - ax) / length, uy = (by - ay) / length;
  for (let s = 0; s <= length; s += 6) {
    add(ax + ux * s, ay + uy * s, 3);
    add(ax + ux * (s + 3) - uy * 5, ay + uy * (s + 3) + ux * 5, 4);
    add(ax + ux * (s + 3) + uy * 5, ay + uy * (s + 3) - ux * 5, 4);
  }
}
const wallZone = (x, y) => {
  const d = Math.min(x - 450, 1471 - x);
  return d <= 120 && d < Math.min(y - 502, 841.5 - y) + 4;
};
for (let k = 1; k <= 7; k++) {
  for (let y = 510 + (k % 2) * 8; y < 836; y += 16) {
    if (!wallZone(450 + 17 * k, y)) continue;
    add(450 + 17 * k, y, 11);
    add(1471 - 17 * k, y, 11);
  }
}
const rows = [405, 421, 436, 451, 467, 484, 488, 518, 536, 553, 571, 589, 607, 625, 643, 661, 682, 701, 720, 738, 756, 773, 791, 808, 825];
rows.forEach((y, r) => {
  for (let x = 450 + (r % 2) * 8; x < 1471; x += 16) {
    if (inside(x, y) && !wallZone(x, y) && size(x, y) > 14) {
      const wave = y > 520 && y < 700 ? Math.sin(x / 60 + r) * 1.5 : 0;
      add(x, y + wave, 10);
    }
  }
});
for (let i = 0; i < 40000; i++) {
  const x = 640 + random() * 640, y = 390 + random() * 330;
  if (inside(x, y) && pileDistance(x, y) > 5) add(x, y, size(x, y) * 0.8);
}

// Bowyer-Watson triangulation
function circle(a, b, c) {
  const [ax, ay] = points[a], [bx, by] = points[b], [cx, cy] = points[c];
  const d = 2 * (ax * (by - cy) + bx * (cy - ay) + cx * (ay - by));
  const a2 = ax * ax + ay * ay, b2 = bx * bx + by * by, c2 = cx * cx + cy * cy;
  const x = (a2 * (by - cy) + b2 * (cy - ay) + c2 * (ay - by)) / d;
  const y = (a2 * (cx - bx) + b2 * (ax - cx) + c2 * (bx - ax)) / d;
  return { v: [a, b, c], x, y, r: (ax - x) ** 2 + (ay - y) ** 2 };
}
points.sort((p, q) => p[0] - q[0]);
const count = points.length;
points.push([-9000, -9000], [11000, -9000], [960, 14000]);
let live = [circle(count, count + 1, count + 2)];
const finished = [];
for (let i = 0; i < count; i++) {
  const [px, py] = points[i];
  const edges = new Map();
  live = live.filter((t) => {
    const dx = px - t.x;
    if (dx > 0 && dx * dx > t.r) { finished.push(t); return false; }
    if (dx * dx + (py - t.y) ** 2 >= t.r) return true;
    for (let e = 0; e < 3; e++) {
      const a = t.v[e], b = t.v[(e + 1) % 3], key = a < b ? a * 10000 + b : b * 10000 + a;
      if (edges.has(key)) edges.delete(key); else edges.set(key, [a, b]);
    }
    return false;
  });
  for (const [a, b] of edges.values()) live.push(circle(a, b, i));
}
let path = '';
const drawn = new Set();
for (const t of finished.concat(live)) {
  if (t.v.some((v) => v >= count)) continue;
  const cx = t.v.reduce((s, v) => s + points[v][0], 0) / 3, cy = t.v.reduce((s, v) => s + points[v][1], 0) / 3;
  if (!inside(cx, cy)) continue;
  for (let e = 0; e < 3; e++) {
    const a = Math.min(t.v[e], t.v[(e + 1) % 3]), b = Math.max(t.v[e], t.v[(e + 1) % 3]);
    if (drawn.has(a * 10000 + b)) continue;
    drawn.add(a * 10000 + b);
    path += `M${points[a][0].toFixed(1)} ${points[a][1].toFixed(1)}L${points[b][0].toFixed(1)} ${points[b][1].toFixed(1)}`;
  }
}
document.getElementById('mesh').setAttribute('d', path);
```
